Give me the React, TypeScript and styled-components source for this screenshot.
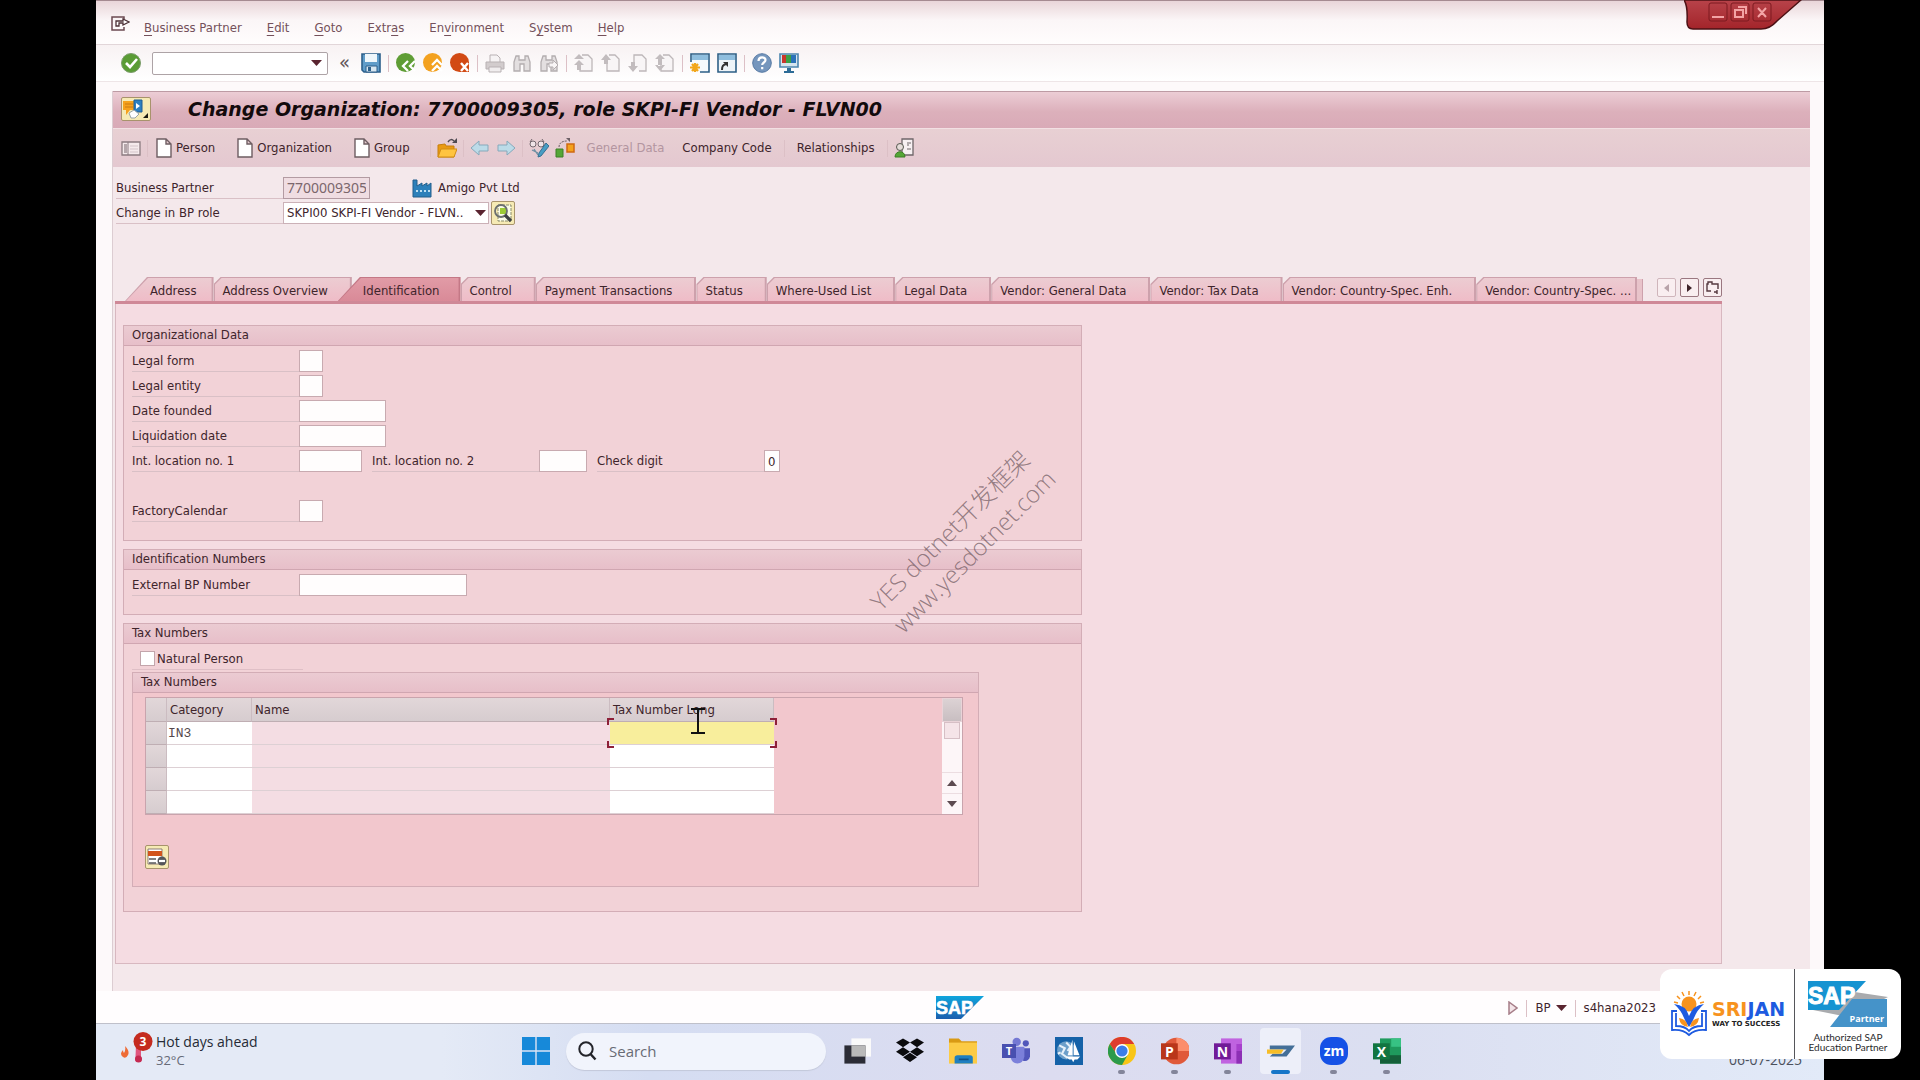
import React from 'react'
import styled, { createGlobalStyle } from 'styled-components'

interface IMenu {
  before: string
  key: string
  after: string
}
interface ITab {
  title: string
  active?: boolean
  sloped?: boolean
}
interface IField {
  id: string
  label: string
  width: number
  value?: string
}
interface IIcon {
  name: string
}

const menus: IMenu[] = [
  { before: '', key: 'B', after: 'usiness Partner' },
  { before: '', key: 'E', after: 'dit' },
  { before: '', key: 'G', after: 'oto' },
  { before: 'Extr', key: 'a', after: 's' },
  { before: 'En', key: 'v', after: 'ironment' },
  { before: 'S', key: 'y', after: 'stem' },
  { before: '', key: 'H', after: 'elp' },
]

const tools: string[] = [
  'save', '|', 'back', 'exit', 'cancel', '|', 'print', 'find', 'findNext', '|',
  'firstPage', 'prevPage', 'nextPage', 'lastPage', '|', 'session', 'shortcut', '|', 'help', 'monitor',
]

const tabs: ITab[] = [
  { title: 'Address', sloped: true },
  { title: 'Address Overview' },
  { title: 'Identification', sloped: true, active: true },
  { title: 'Control' },
  { title: 'Payment Transactions' },
  { title: 'Status' },
  { title: 'Where-Used List' },
  { title: 'Legal Data' },
  { title: 'Vendor: General Data' },
  { title: 'Vendor: Tax Data' },
  { title: 'Vendor: Country-Spec. Enh.' },
  { title: 'Vendor: Country-Spec. ...' },
]

const orgRows: IField[][] = [
  [{ id: 'legalForm', label: 'Legal form', width: 24 }],
  [{ id: 'legalEntity', label: 'Legal entity', width: 24 }],
  [{ id: 'founded', label: 'Date founded', width: 87 }],
  [{ id: 'liquidation', label: 'Liquidation date', width: 87 }],
  [
    { id: 'loc1', label: 'Int. location no. 1', width: 63 },
    { id: 'loc2', label: 'Int. location no. 2', width: 48 },
    { id: 'digit', label: 'Check digit', width: 16, value: '0' },
  ],
  [],
  [{ id: 'calendar', label: 'FactoryCalendar', width: 24 }],
]

const apps = [
  { name: 'taskView' },
  { name: 'dropbox' },
  { name: 'explorer' },
  { name: 'teams' },
  { name: 'ship' },
  { name: 'chrome', open: true },
  { name: 'powerpoint', open: true },
  { name: 'onenote', open: true },
  { name: 'sapLogon', open: true, active: true },
  { name: 'zoom', open: true },
  { name: 'excel', open: true },
]

const binoculars = (
  <path
    d="M2 18V9l2-6h3v4h6V3h3l2 6v9h-6v-7H8v7z"
    fill="#e3dfe0"
    stroke="#b3adaf"
    strokeWidth="1.3"
  />
)
const sheet = <path d="M8 2h6l4 4v12H6V9" fill="#f8f5f6" stroke="#bdb7b9" strokeWidth="1.3" />
const officeLetter = { fontFamily: 'Open Sans, sans-serif', fontWeight: 700, fill: '#fff' }

const drawings: Record<string, React.ReactElement> = {
  ok: (
    <>
      <circle cx="10" cy="10" r="9.5" fill="#5a9c35" stroke="#7b9c6a" />
      <path d="M5 10l4 4 7-8" fill="none" stroke="#fff" strokeWidth="2.6" />
    </>
  ),
  save: (
    <>
      <path d="M1 1h18v18H3l-2-2z" fill="#5f9cc9" stroke="#2c5f8b" strokeWidth="1.6" />
      <path d="M4 1h12v8H4z" fill="#eef6fb" />
      <path d="M5 13h11v6H5z" fill="#d7e6f0" stroke="#2c5f8b" />
      <path d="M7 14h3v4H7z" fill="#2c5f8b" />
    </>
  ),
  back: (
    <>
      <circle cx="9.5" cy="9.5" r="9.5" fill="#5f9d35" />
      <path d="M12 8l-5 5 5 5M19 8l-5 5 5 5" fill="none" stroke="#fff" strokeWidth="2.3" />
    </>
  ),
  exit: (
    <>
      <circle cx="9.5" cy="9.5" r="9.5" fill="#f3a11f" />
      <path d="M9 12l5-5 5 5M9 18l5-5 5 5" fill="none" stroke="#fff" strokeWidth="2.3" />
    </>
  ),
  cancel: (
    <>
      <circle cx="9.5" cy="9.5" r="9.5" fill="#d24a14" />
      <path d="M10 9h9v10h-9z" fill="#d24a14" />
      <path d="M11 10l7 8M18 10l-7 8" stroke="#fff" strokeWidth="2.4" />
    </>
  ),
  print: (
    <>
      <path d="M5 9V2h7l3 3v4" fill="#f6f3f4" stroke="#b8b1b3" />
      <path d="M1 9h18v7H1z" fill="#d2cccd" stroke="#b8b1b3" />
      <path d="M4 14h12v5H4z" fill="#f0edee" stroke="#b8b1b3" />
    </>
  ),
  find: binoculars,
  findNext: (
    <>
      {binoculars}
      <path d="M10 10h4V7l5 5-5 5v-3h-4z" fill="#f8f5f6" stroke="#b3adaf" />
    </>
  ),
  firstPage: (
    <>
      {sheet}
      <path d="M5 1l5 5H0zM5 7l5 5H0zM3 12h4v5H3z" fill="#c2bcbe" />
    </>
  ),
  prevPage: (
    <>
      {sheet}
      <path d="M5 1l5 6H7v4H3V7H0z" fill="#c2bcbe" />
    </>
  ),
  nextPage: (
    <>
      <path d="M6 9V2h8l4 4v12h-7" fill="#f8f5f6" stroke="#bdb7b9" strokeWidth="1.3" />
      <path d="M5 19l5-6H7V9H3v4H0z" fill="#c2bcbe" />
    </>
  ),
  lastPage: (
    <>
      {sheet}
      <path d="M5 1l5 5H0zM3 6h4v7H3zM5 18l5-6H0z" fill="#c2bcbe" />
    </>
  ),
  session: (
    <>
      <path d="M1 9V1h18v18h-9" fill="#f4f9fc" stroke="#2d5f86" strokeWidth="1.6" />
      <path d="M2 2h16v5H2z" fill="#8fbede" />
      <path d="M5 10v9M0 14.5h10M2 11l6 7M8 11l-6 7" stroke="#f2a71b" strokeWidth="2.2" />
    </>
  ),
  shortcut: (
    <>
      <path d="M1 1h18v18H1z" fill="#eef4f8" stroke="#2d5f86" strokeWidth="1.6" />
      <path d="M2 2h16v5H2z" fill="#8fbede" />
      <path d="M5 17c0-4 1-5 4-6" fill="none" stroke="#333" strokeWidth="2" />
      <path d="M6 9h5v5z" fill="#333" />
    </>
  ),
  help: (
    <>
      <circle cx="10" cy="10" r="9.3" fill="#7596bd" stroke="#5679a3" />
      <path
        d="M6.5 8c0-5 7-4.5 7-1 0 2.5-3.300 2.5-3.300 5M10.200 14v2.300"
        fill="none"
        stroke="#fff"
        strokeWidth="2.2"
      />
    </>
  ),
  monitor: (
    <>
      <path d="M1 1h18v13H1z" fill="#d5e4ee" stroke="#4d86ae" strokeWidth="1.6" />
      <path d="M3 2h4v8H3z" fill="#c9372c" />
      <path d="M7 2h5v8H7z" fill="#3da045" />
      <path d="M12 2h5v8h-5z" fill="#2b72b8" />
      <path d="M8 15h4v3h3v2H5v-2h3z" fill="#2d6c97" />
    </>
  ),
  panel: (
    <>
      <path d="M1 4h18v13H1z" fill="#f5eaec" stroke="#8b7b80" strokeWidth="1.3" />
      <path d="M3 6h3v9H3z" fill="#b5a7ab" />
      <path d="M7 4v13" stroke="#8b7b80" />
      <path d="M9 8h8M9 11h8M9 14h8" stroke="#d3c4c9" />
    </>
  ),
  page: <path d="M3 1h9l5 5v13H3z M12 1v5h5" fill="#fff" stroke="#6e5d62" strokeWidth="1.4" />,
  folder: (
    <>
      <path d="M1 7l7-1 1 2h8v11H1z" fill="#e99a13" stroke="#c77f0d" />
      <path d="M4 11h16l-3 8H1z" fill="#ffc440" stroke="#d18d16" />
      <path d="M11 4c2-3 4-3 6-1" fill="none" stroke="#4f4a52" strokeWidth="1.5" />
      <path d="M20 0v5h-5z" fill="#4f4a52" />
    </>
  ),
  left: <path d="M1 10l8-7v4h9v6H9v4z" fill="#bcdbe8" stroke="#86a9bb" />,
  right: <path d="M19 10l-8-7v4H2v6h9v4z" fill="#bcdbe8" stroke="#86a9bb" />,
  display: (
    <>
      <circle cx="4" cy="6" r="3" fill="#f0e4e8" stroke="#74686f" />
      <circle cx="12" cy="6" r="3" fill="#f0e4e8" stroke="#74686f" />
      <path d="M1 4l2-3M15 4l-2-3" stroke="#74686f" />
      <path d="M17 5l3 3-8 10-3 1 1-4z" fill="#489dc4" stroke="#356f92" />
      <path d="M5 11l4 6M3 12l6 3" stroke="#6d8ea2" strokeWidth="1.3" />
    </>
  ),
  relation: (
    <>
      <path d="M1 11h7v8H1z" fill="#55a636" stroke="#3c7f26" />
      <path d="M12 6h7v8h-7z" fill="#f4a21d" stroke="#cf6a12" strokeWidth="1.5" />
      <path d="M4 9c0-4 3-6 8-6" fill="none" stroke="#6d6066" strokeDasharray="2 1" />
      <path d="M11 0h4v4z" fill="#6d6066" />
    </>
  ),
  person: (
    <>
      <path d="M8 1h11v16H8z" fill="#f7f0f2" stroke="#6f6669" strokeWidth="1.3" />
      <path d="M14 4v4M13 11h4M16 4v2" stroke="#6f6669" />
      <circle cx="6" cy="9" r="3.5" fill="#e5dcd9" stroke="#55574f" />
      <path d="M1 19c0-7 10-7 10 0z" fill="#55a636" stroke="#3c7f26" />
    </>
  ),
  service: (
    <>
      <path d="M1 2h13v9H8l-4 5v-5H1z" fill="#f6a11c" />
      <path d="M3 5h8M3 8h8" stroke="#c97a10" />
      <path d="M12 1h8v12h-8z" fill="#2c7fc1" stroke="#1f5d93" />
      <path d="M14 4l4 3-4 3z" fill="#fff" />
      <path d="M7 14l5-3 5 4-4 4H9z" fill="#fff" stroke="#9aa5a8" />
      <path d="M26 14v5h-5z" fill="#1c1a12" />
    </>
  ),
  factory: (
    <>
      <path d="M1 2h4v6l5-3v3l5-3v3l4-3v14H1z" fill="#2d80ba" stroke="#235f8c" />
      <path d="M4 13h2M8 13h2M12 13h2M16 13h2" stroke="#bfe0f2" strokeWidth="2" />
    </>
  ),
  lookup: (
    <>
      <path d="M5 2h13v16H5z" fill="#fafbe6" stroke="#888a6c" strokeDasharray="3 1" />
      <path d="M7 5h7v6H7z" fill="#9ccb35" />
      <circle cx="8" cy="8" r="6" fill="none" stroke="#6b6f70" strokeWidth="1.8" />
      <path d="M12 12l6 6" stroke="#3c4043" strokeWidth="3.2" />
    </>
  ),
  removeRow: (
    <>
      <path d="M1 2h14v15H1z" fill="#fff" stroke="#8d7c74" />
      <path d="M1 4h14v5H1z" fill="#d2541c" />
      <path d="M2 12h7M2 16h7" stroke="#59595b" strokeWidth="1.5" />
      <circle cx="15" cy="14" r="4.5" fill="#55565a" />
      <path d="M12 14h6" stroke="#fff" strokeWidth="2.2" />
    </>
  ),
  windows: (
    <path
      d="M0 0h9.500v9.500H0zM10.500 0H20v9.500h-9.500zM0 10.500h9.500V20H0zM10.500 10.500H20V20h-9.500z"
      fill="#1789d9"
    />
  ),
  taskView: (
    <>
      <path d="M6 1h14v13H6z" fill="#fafafa" />
      <path d="M1 6h15v13H1z" fill="#2b2c36" />
      <path d="M6 6h10v8H6z" fill="#b9b9b9" />
    </>
  ),
  dropbox: (
    <path
      d="M5 1l5 3-5 3.300L0 4zM15 1l5 3-5 3.300L10 4zM5 7.300l5 3.200-5 3.200-5-3.200zM15 7.300l5 3.200-5 3.200-5-3.200zM5 14.500l5-3.200 5 3.200-5 3.300z"
      fill="#0b0b0e"
    />
  ),
  explorer: (
    <>
      <path d="M0 1h7l2 2h11v4H0z" fill="#d99a14" />
      <path d="M0 4h20v15H0z" fill="#fccb45" />
      <path d="M4 19v-4q0-2 2-2h9q2 0 2 2v4z" fill="#1f7fc0" />
      <path d="M7 16h7" stroke="#114f83" strokeWidth="1.2" />
    </>
  ),
  teams: (
    <>
      <circle cx="10.5" cy="3.5" r="3" fill="#7478d3" />
      <circle cx="17" cy="4.5" r="2.2" fill="#5157ba" />
      <path d="M13 8h7v6q-1 4-5 3z" fill="#5157ba" />
      <path d="M6 7h10v7q-1 5-5 5t-5-5z" fill="#7b80da" />
      <path d="M0 5h10v10H0z" fill="#4950b0" />
      <text x="5" y="13" fontSize="8" textAnchor="middle" style={officeLetter}>T</text>
    </>
  ),
  ship: (
    <>
      <path d="M0 0h20v20H0z" fill="#1562a8" />
      <circle cx="8" cy="9.5" r="6.5" fill="#6c9fca" />
      <path d="M3 6l4 2-2 4 4 3M8 4l3 3-2 3M4 11l-2 1" fill="none" stroke="#e6f1fa" strokeWidth="1.5" />
      <path d="M12.500 2v11H9zM13.500 3l4 10h-4zM8 14h10l-2 2h-2l-1 2-1-2h-2z" fill="#fff" />
    </>
  ),
  chrome: (
    <>
      <circle cx="10" cy="10" r="10" fill="#f8c517" />
      <path d="M1.300 5A10 10 0 0 1 18.700 5H10L6 12z" fill="#dd3c2d" />
      <path d="M1.300 5A10 10 0 0 0 10 20l4.500-8H6z" fill="#2b9a4b" />
      <circle cx="10" cy="10" r="5" fill="#fff" />
      <circle cx="10" cy="10" r="4" fill="#3b7de8" />
    </>
  ),
  powerpoint: (
    <>
      <circle cx="11" cy="10" r="9.5" fill="#e0593a" />
      <path d="M11 .5A9.500 9.500 0 0 1 20.500 10H11z" fill="#fc8e6c" />
      <path d="M0 4.500h12v11.500H0z" fill="#b9361a" />
      <text x="6" y="14" fontSize="10" textAnchor="middle" style={officeLetter}>P</text>
    </>
  ),
  onenote: (
    <>
      <path d="M5 1h15v18H5z" fill="#c063e0" />
      <path d="M16 5h4v5h-4z" fill="#a741cc" />
      <path d="M16 10h4v9h-4z" fill="#8d2fb5" />
      <path d="M0 4.500h12v11.500H0z" fill="#711b97" />
      <text x="6" y="14" fontSize="10" textAnchor="middle" style={officeLetter}>N</text>
    </>
  ),
  sapLogon: (
    <>
      <path d="M2 6h18l-6 8H2l2-2h7l3-3H2z" fill="#446f98" />
      <path d="M0 9h12l-2 3H0z" fill="#f6bd27" />
    </>
  ),
  zoom: (
    <>
      <rect width="20" height="20" rx="8" fill="#1551e6" />
      <text x="10" y="13.5" fontSize="10" textAnchor="middle" style={officeLetter}>zm</text>
    </>
  ),
  excel: (
    <>
      <path d="M5 1h15v18H5z" fill="#1f9a5d" />
      <path d="M13 1h7v6h-7z" fill="#37c283" />
      <path d="M5 13h15v6H5z" fill="#15603a" />
      <path d="M0 4.500h12v11.500H0z" fill="#127540" />
      <text x="6" y="14" fontSize="10" textAnchor="middle" style={officeLetter}>X</text>
    </>
  ),
}

const Icon = ({ name }: IIcon): React.ReactElement => (
  <svg width="20" height="20" viewBox="0 0 20 20" aria-hidden="true">
    {drawings[name]}
  </svg>
)

const Caret = (): React.ReactElement => (
  <svg width="11" height="6" viewBox="0 0 11 6" aria-hidden="true">
    <path d="M0 0h11L5.500 6z" fill="#5a2430" />
  </svg>
)

const SapLogo = ({ width }: { width: number }): React.ReactElement => (
  <svg width={width} viewBox="0 0 48 23" role="img" aria-label="SAP">
    <defs>
      <linearGradient id="sap" x2="0" y2="1">
        <stop stopColor="#0fa5dd" />
        <stop offset="1" stopColor="#1b5fae" />
      </linearGradient>
    </defs>
    <path d="M0 0h48L25 23H0z" fill="url(#sap)" />
    <text x="0" y="18" fontSize="18" fontFamily="Liberation Sans, sans-serif" fontWeight="700" fill="#fff" stroke="#fff" strokeWidth=".6">
      SAP
    </text>
  </svg>
)

const Field = ({ id, label, width, value = '' }: IField): React.ReactElement => (
  <>
    <Label htmlFor={id}>{label}</Label>
    <TextBox id={id} $width={width} defaultValue={value} />
  </>
)

const App = (): React.ReactElement => {
  return (
    <Screen>
      <GlobalStyle />
      <Window>
        <MenuBar>
          <svg width="19" height="15" viewBox="0 0 19 15" aria-hidden="true">
            <path d="M13 11v3H1V1h12v2" fill="none" stroke="#6b4a51" strokeWidth="1.5" />
            <path d="M5 10V5h7V3l6 3-6 3V7H8v3z" fill="#fff" stroke="#4c3036" strokeWidth="1.3" />
          </svg>
          {menus.map((el) => (
            <MenuItem key={el.key + el.after}>
              {el.before}
              <u>{el.key}</u>
              {el.after}
            </MenuItem>
          ))}
          <WindowButtons>
            <svg width="118" height="32" viewBox="0 0 118 32" aria-hidden="true">
              <defs>
                <linearGradient id="red" x2="0" y2="1">
                  <stop stopColor="#b8434a" />
                  <stop offset="1" stopColor="#a3242a" />
                </linearGradient>
              </defs>
              <path d="M0 0q4 6 3 22 0 7 6 7h68q9 0 16-8L117 0z" fill="url(#red)" stroke="#4b1014" strokeWidth="1.5" />
              <g fill="none" stroke="#7c1a20">
                <rect x="25" y="3" width="18" height="18" rx="2" />
                <rect x="47" y="3" width="18" height="18" rx="2" />
                <rect x="69" y="3" width="18" height="18" rx="2" />
              </g>
              <g fill="none" stroke="#f3a3a5" strokeWidth="2">
                <path d="M28 17h12M51 10h8v7h-8zM54 7h8v7M74 8l8 9M82 8l-8 9" />
              </g>
            </svg>
          </WindowButtons>
        </MenuBar>
        <ToolBar>
          <IconButton aria-label="Enter"><Icon name="ok" /></IconButton>
          <Command>
            <input aria-label="Command" />
            <Caret />
          </Command>
          <Collapse>«</Collapse>
          <Tools>
            {tools.map((el, i) =>
              el === '|' ? (
                <Divider key={i} />
              ) : (
                <IconButton key={i} aria-label={el}><Icon name={el} /></IconButton>
              ),
            )}
          </Tools>
        </ToolBar>
        <Workspace>
          <TitleBar>
            <YellowButton $width={30} aria-label="Services for object">
              <svg width="28" height="20" viewBox="0 0 28 20" aria-hidden="true">{drawings.service}</svg>
            </YellowButton>
            <h1>Change Organization: 7700009305, role SKPI-FI Vendor - FLVN00</h1>
          </TitleBar>
          <AppBar>
            <IconButton aria-label="Locator"><Icon name="panel" /></IconButton>
            <Divider />
            <AppButton><Icon name="page" />Person</AppButton>
            <AppButton><Icon name="page" />Organization</AppButton>
            <AppButton><Icon name="page" />Group</AppButton>
            <Divider />
            <IconButton aria-label="Open"><Icon name="folder" /></IconButton>
            <Divider />
            <IconButton aria-label="Previous"><Icon name="left" /></IconButton>
            <IconButton aria-label="Next"><Icon name="right" /></IconButton>
            <Divider />
            <IconButton aria-label="Display"><Icon name="display" /></IconButton>
            <IconButton aria-label="Relation"><Icon name="relation" /></IconButton>
            <AppText disabled>General Data</AppText>
            <AppText>Company Code</AppText>
            <Divider />
            <AppText>Relationships</AppText>
            <Divider />
            <IconButton aria-label="Person data"><Icon name="person" /></IconButton>
          </AppBar>
          <Content>
            <Rows>
              <Row>
                <Label htmlFor="bp">Business Partner</Label>
                <NumberBox id="bp" $width={87} readOnly value="7700009305" />
                <Company><Icon name="factory" />Amigo Pvt Ltd</Company>
              </Row>
              <Row>
                <Label htmlFor="role">Change in BP role</Label>
                <Role>
                  <select id="role">
                    <option>SKPI00 SKPI-FI Vendor - FLVN..</option>
                  </select>
                  <Caret />
                </Role>
                <YellowButton $width={24} aria-label="Role details"><Icon name="lookup" /></YellowButton>
              </Row>
            </Rows>
            <TabStrip>
              {tabs.map((el) => (
                <Tab key={el.title} $active={el.active} $sloped={el.sloped}>
                  <span>{el.title}</span>
                </Tab>
              ))}
              <TabEdge />
              <TabButtons>
                <TabButton disabled aria-label="Previous tab">
                  <svg width="5" height="8"><path d="M5 0v8L0 4z" fill="#b8a3a9" /></svg>
                </TabButton>
                <TabButton aria-label="Next tab">
                  <svg width="5" height="8"><path d="M0 0v8l5-4z" fill="#3d2329" /></svg>
                </TabButton>
                <TabButton aria-label="Tab list">
                  <svg width="13" height="13" fill="none" stroke="#55393f" strokeWidth="1.4">
                    <path d="M5 10H1V3h1V1h4v2h6v5M8 11h3M11 9v4" />
                  </svg>
                </TabButton>
              </TabButtons>
            </TabStrip>
            <TabPanel>
              <Group>
                <GroupTitle>Organizational Data</GroupTitle>
                <GroupBody>
                  {orgRows.map((row, i) => (
                    <Row key={i}>
                      {row.map((el) => (
                        <FieldSet key={el.id}><Field {...el} /></FieldSet>
                      ))}
                    </Row>
                  ))}
                </GroupBody>
              </Group>
              <Group>
                <GroupTitle>Identification Numbers</GroupTitle>
                <GroupBody>
                  <Row><Field id="external" label="External BP Number" width={168} /></Row>
                </GroupBody>
              </Group>
              <Group>
                <GroupTitle>Tax Numbers</GroupTitle>
                <GroupBody $last>
                  <CheckLabel>
                    <input type="checkbox" />
                    Natural Person
                  </CheckLabel>
                  <InnerGroup>
                    <GroupTitle>Tax Numbers</GroupTitle>
                    <TaxArea>
                      <TableFrame>
                        <TaxTable>
                          <colgroup>
                            <SelectCol />
                            <CategoryCol />
                            <col />
                            <LongCol />
                          </colgroup>
                          <thead>
                            <tr>
                              <th aria-label="Select" />
                              <th>Category</th>
                              <th>Name</th>
                              <th>Tax Number Long</th>
                            </tr>
                          </thead>
                          <tbody>
                            {['IN3', '', '', ''].map((el, i) => (
                              <tr key={i}>
                                <th aria-label="Select row" />
                                <Cell><input aria-label="Category" defaultValue={el} /></Cell>
                                <Cell $locked />
                                <Cell $focused={i === 0}>
                                  <input aria-label="Tax Number Long" />
                                  {i === 0 && (
                                    <>
                                      <Focus />
                                      <Pointer width="14" height="26" viewBox="0 0 14 26">
                                        <path d="M0 1h14M0 25h14M7 1v24" stroke="#111" strokeWidth="2" />
                                      </Pointer>
                                    </>
                                  )}
                                </Cell>
                              </tr>
                            ))}
                          </tbody>
                        </TaxTable>
                        <ScrollBar>
                          <ScrollHead />
                          <ScrollTrack><i /></ScrollTrack>
                          <ScrollButton aria-label="Scroll up">
                            <svg width="10" height="6"><path d="M5 0l5 6H0z" fill="#5c4a50" /></svg>
                          </ScrollButton>
                          <ScrollButton aria-label="Scroll down">
                            <svg width="10" height="6"><path d="M0 0h10L5 6z" fill="#5c4a50" /></svg>
                          </ScrollButton>
                        </ScrollBar>
                      </TableFrame>
                      <YellowButton $width={24} aria-label="Delete row"><Icon name="removeRow" /></YellowButton>
                    </TaxArea>
                  </InnerGroup>
                </GroupBody>
              </Group>
            </TabPanel>
          </Content>
        </Workspace>
        <StatusBar>
          <SapLogo width={48} />
          <StatusItems>
            <svg width="10" height="14" viewBox="0 0 10 14" aria-hidden="true">
              <path d="M1 1l8 6-8 6z" fill="#f3e4e8" stroke="#a67d88" strokeWidth="1.5" />
            </svg>
            <Divider />
            <StatusButton>BP <Caret /></StatusButton>
            <Divider />
            <span>s4hana2023</span>
          </StatusItems>
        </StatusBar>
        <TaskBar>
          <Weather>
            <svg width="34" height="36" viewBox="0 0 34 36" aria-hidden="true">
              <path d="M5 14q5 5 3 9-2 4-5 2-4-3 0-7 0 2 1 3 2-3 1-7z" fill="#ee6b35" />
              <path d="M16 12h5v13q2 5-2.500 5t-3-5z" fill="#e0567e" />
              <circle cx="18.5" cy="27" r="3.5" fill="#c52a51" />
              <circle cx="23" cy="9.5" r="9.5" fill="#c42b1f" />
              <text x="23" y="14" fontSize="12" textAnchor="middle" style={officeLetter}>3</text>
            </svg>
            <p>
              Hot days ahead
              <small>32°C</small>
            </p>
          </Weather>
          <Dock>
            <AppIcon aria-label="Start"><Icon name="windows" /></AppIcon>
            <Search>
              <svg width="19" height="20" viewBox="0 0 19 20" aria-hidden="true">
                <circle cx="8" cy="8" r="6.7" fill="none" stroke="#23242a" strokeWidth="2" />
                <path d="M12.500 13l5 5.500" stroke="#23242a" strokeWidth="2.4" />
              </svg>
              <input placeholder="Search" aria-label="Search" />
            </Search>
            <Apps>
              {apps.map((el) => (
                <AppIcon key={el.name} $open={el.open} $active={el.active} aria-label={el.name}>
                  <Icon name={el.name} />
                </AppIcon>
              ))}
            </Apps>
          </Dock>
          <Today>06-07-2025</Today>
        </TaskBar>
      </Window>
      <Watermark>
        YES dotnet开发框架
        <br />
        www.yesdotnet.com
      </Watermark>
      <Partners>
        <Srijan>
          <svg width="36" height="46" viewBox="0 0 36 46" aria-hidden="true">
            <circle cx="18" cy="13" r="7.5" fill="#f7931e" />
            <path
              d="M18 0v4M11 1l2 4M25 1l-2 4M6 5l3 3M30 5l-3 3M3 11l4 1M33 11l-4 1"
              stroke="#f7931e"
              strokeWidth="1.5"
            />
            <path d="M3 13q12 1 15 12 4-11 15-12-7 6-10 14-2 5-5 9-3-4-5-9-3-8-10-14z" fill="#1e5be0" />
            <path
              d="M6 20H1v19q11-1 17 5 6-6 17-5V20h-5M5 22v13q9 0 13 5 4-5 13-5V22"
              fill="none"
              stroke="#1e5be0"
              strokeWidth="1.8"
            />
            <path d="M8 27q8 1 9 9-8-1-9-9zM28 27q-8 1-9 9 8-1 9-9z" fill="#f7931e" />
          </svg>
          <div>
            <Brand><b>SRI</b>JAN</Brand>
            <Slogan>WAY TO SUCCESS</Slogan>
          </div>
        </Srijan>
        <SapPartner>
          <svg width="80" height="46" viewBox="0 0 80 46" role="img" aria-label="SAP Partner">
            <path d="M0 28L40 10l40 6-40 20z" fill="#a9abae" />
            <path d="M44 18h35v28H22z" fill="#4593c9" />
            <path d="M0 0h58L31 29H0z" fill="#1693d1" />
            <text x="0" y="23" fontSize="23" fontFamily="Liberation Sans, sans-serif" fontWeight="700" fill="#fff" stroke="#fff">SAP</text>
            <text x="76" y="41" fontSize="9" textAnchor="end" style={officeLetter}>Partner</text>
          </svg>
          <span>
            Authorized SAP
            <br />
            Education Partner
          </span>
        </SapPartner>
      </Partners>
    </Screen>
  )
}

const GlobalStyle = createGlobalStyle`
  * {
    box-sizing: border-box;
  }
  body {
    margin: 0;
    background: #000;
    color: #3e242b;
    font-family: 'DejaVu Sans Condensed', 'Noto Sans', sans-serif;
    font-size: 13px;
    line-height: 16px;
  }
  button,
  input,
  select {
    margin: 0;
    padding: 0;
    border: 0;
    background: none;
    color: inherit;
    font: inherit;
  }
  svg {
    display: block;
    flex: none;
  }
`
const Screen = styled.div`
  position: relative;
  min-height: 100vh;
  padding: 0 5%;
  display: flex;
`
const Window = styled.div`
  position: relative;
  flex: 1;
  min-width: 0;
  display: flex;
  flex-direction: column;
  background: #fdf9fa;
`
const MenuBar = styled.nav`
  display: flex;
  align-items: center;
  gap: 25px;
  height: 45px;
  padding: 10px 16px 0 15px;
  border-top: 1px solid #a58a91;
  border-bottom: 1px solid #e2d6d9;
  background: linear-gradient(#e9d5d9, #fbf6f7 45%, #fffdfd);
  svg {
    margin: -8px -11px 0 0;
  }
`
const MenuItem = styled.button`
  color: #74505a;
  white-space: nowrap;
  u {
    text-underline-offset: 3px;
  }
`
const WindowButtons = styled.div`
  position: absolute;
  top: 0;
  right: 22px;
  svg {
    margin: 0;
  }
`
const ToolBar = styled.div`
  display: flex;
  align-items: center;
  height: 37px;
  padding: 0 25px;
  border-bottom: 1px solid #eee5e7;
  background: linear-gradient(#f8f2f3, #fff);
`
const IconButton = styled.button`
  flex: none;
  width: 20px;
  height: 20px;
`
const Command = styled.div`
  position: relative;
  margin-left: 11px;
  input {
    display: block;
    width: 176px;
    height: 23px;
    padding: 0 24px 0 4px;
    border: 1px solid #ada3a6;
    border-radius: 2px;
    background: #fff;
  }
  svg {
    position: absolute;
    right: 6px;
    top: 8px;
  }
`
const Collapse = styled.button`
  width: 33px;
  padding-bottom: 3px;
  color: #62565a;
  font-size: 20px;
`
const Tools = styled.div`
  display: flex;
  align-items: center;
  gap: 7px;
`
const Divider = styled.i`
  flex: none;
  width: 1px;
  height: 17px;
  background: #dcc0c6;
`
const Workspace = styled.main`
  flex: 1;
  display: flex;
  flex-direction: column;
  margin: 9px 14px 0 16px;
  border-left: 1px solid #dccdd2;
`
const TitleBar = styled.header`
  display: flex;
  align-items: center;
  height: 37px;
  padding: 0 8px 2px;
  gap: 37px;
  border-top: 1px solid #bd9ba4;
  background: linear-gradient(#eccdd5, #dcb0bb 55%, #d9aab7);
  h1 {
    margin: 0;
    color: #120a0c;
    font-family: 'DejaVu Sans', sans-serif;
    font-size: 19px;
    line-height: 24px;
    font-style: italic;
    font-weight: 700;
    white-space: nowrap;
  }
`
const YellowButton = styled.button<{ $width: number }>`
  display: flex;
  align-items: center;
  justify-content: center;
  flex: none;
  width: ${({ $width }) => $width}px;
  height: 24px;
  border: 1px solid #a8936c;
  border-radius: 2px;
  background: #f6eab4;
`
const AppBar = styled.div`
  display: flex;
  align-items: center;
  gap: 6px;
  height: 39px;
  padding: 0 8px;
  border-top: 1px solid #f2e0e3;
  background: linear-gradient(#e8d0d3, #e4c8d0);
`
const AppButton = styled.button`
  display: flex;
  align-items: center;
  gap: 2px;
  margin-right: 14px;
  white-space: nowrap;
`
const AppText = styled.button`
  padding: 0 6px;
  white-space: nowrap;
  &:disabled {
    color: #b395a0;
  }
`
const Content = styled.div`
  flex: 1;
  display: flex;
  flex-direction: column;
  padding: 10px 88px 27px 2px;
  background: #f4e8eb;
`
const Rows = styled.div`
  display: flex;
  flex-direction: column;
  gap: 3px;
  padding-left: 1px;
`
const Row = styled.div`
  display: flex;
  height: 22px;
  align-items: center;
`
const FieldSet = styled.div`
  display: flex;
  margin-right: 10px;
`
const Label = styled.label`
  flex: none;
  width: 167px;
  height: 22px;
  border-bottom: 1px solid #d9c0c6;
  line-height: 22px;
`
const TextBox = styled.input<{ $width: number }>`
  width: ${({ $width }) => $width}px;
  height: 22px;
  padding: 0 3px;
  border: 1px solid #c8aab0;
  background: #fffdfd;
`
const NumberBox = styled(TextBox)`
  padding-bottom: 2px;
  border-color: #b39ba2;
  background: #f0dde2;
  color: #7b666c;
  font-family: 'Noto Sans', sans-serif;
  font-size: 14px;
`
const Company = styled.span`
  display: flex;
  align-items: center;
  gap: 6px;
  margin-left: 42px;
`
const Role = styled.div`
  position: relative;
  margin-right: 2px;
  select {
    display: block;
    width: 206px;
    height: 22px;
    padding: 0 18px 0 3px;
    appearance: none;
    border: 1px solid #cbb1b7;
    border-radius: 0;
    background: #fff;
  }
  svg {
    position: absolute;
    right: 3px;
    top: 8px;
  }
`
const TabStrip = styled.div`
  display: flex;
  align-items: flex-end;
  margin-top: 53px;
  padding-left: 10px;
  border-bottom: 3px solid #cf8897;
`
const Tab = styled.button<{ $active?: boolean; $sloped?: boolean }>`
  --shape: ${({ $sloped }) =>
    $sloped
      ? 'polygon(0 100%, 22px 0, 100% 0, 100% 100%)'
      : 'polygon(0 7px, 7px 0, 100% 0, 100% 100%, 0 100%)'};
  position: relative;
  height: 24px;
  margin-left: ${({ $active }) => ($active ? -14 : 0)}px;
  padding: 3px 24px 0 ${({ $sloped }) => ($sloped ? 25 : 9)}px;
  background: ${({ $active }) => ($active ? '#c47886' : '#cda1ac')};
  clip-path: var(--shape);
  white-space: nowrap;
  &::before {
    content: '';
    position: absolute;
    inset: 1px 2px 0 1px;
    background: ${({ $active }) =>
      $active ? 'linear-gradient(#e19ba6, #d98a98)' : 'linear-gradient(#ecccd2, #efbcc7)'};
    clip-path: var(--shape);
  }
  span {
    position: relative;
  }
  &:first-child {
    padding-right: 17px;
  }
  &:nth-child(3) {
    padding-right: 21px;
  }
  &:nth-child(12) {
    padding-right: 6px;
  }
`
const TabEdge = styled.i`
  width: 6px;
  height: 22px;
  border-right: 1px solid #cda1ac;
  background: #e8c3ca;
`
const TabButtons = styled.div`
  display: flex;
  gap: 4px;
  margin: 0 0 4px auto;
`
const TabButton = styled.button`
  display: flex;
  align-items: center;
  justify-content: center;
  width: 19px;
  height: 19px;
  border: 1px solid #9a7780;
  border-radius: 2px;
  background: #f9eef0;
  &:disabled {
    border-color: #cfb5bb;
  }
`
const TabPanel = styled.section`
  flex: 1;
  display: flex;
  flex-direction: column;
  gap: 8px;
  padding: 21px 0 51px 7px;
  border: 1px solid #d8b8c0;
  border-top: 0;
  background: #f5dce2;
`
const Group = styled.section`
  width: 60%;
  border: 1px solid #d3adb6;
  background: #f2d2d7;
`
const InnerGroup = styled(Group)`
  width: 90%;
  margin-top: 2px;
  background: #f2c7cd;
`
const GroupTitle = styled.h2`
  margin: 0;
  height: 20px;
  padding: 0 8px;
  border-bottom: 1px solid #d0a6b1;
  background: linear-gradient(#ebcbd2, #e7bfc9);
  font-size: 13px;
  font-weight: 400;
  line-height: 18px;
`
const GroupBody = styled.div<{ $last?: boolean }>`
  display: flex;
  flex-direction: column;
  gap: ${({ $last }) => ($last ? 0 : 3)}px;
  padding: 4px 8px ${({ $last }) => ($last ? 24 : 18)}px;
`
const CheckLabel = styled.label`
  display: flex;
  align-items: center;
  gap: 2px;
  width: 171px;
  height: 22px;
  padding-left: 8px;
  border-bottom: 1px solid #dfbfc6;
  input {
    width: 15px;
    height: 15px;
    appearance: none;
    border: 1px solid #c3a5ab;
    background: #fff;
  }
`
const TaxArea = styled.div`
  display: flex;
  flex-direction: column;
  gap: 30px;
  padding: 4px 15px 17px 12px;
`
const TableFrame = styled.div`
  display: flex;
  justify-content: space-between;
  border: 1px solid #c9a4ad;
`
const TaxTable = styled.table`
  width: 77%;
  table-layout: fixed;
  border-collapse: separate;
  border-spacing: 0;
  th {
    height: 23px;
    padding: 0 3px;
    border-right: 1px solid #cbbcc1;
    border-bottom: 1px solid #bfaeb3;
    background: linear-gradient(#e2d7d9, #d6cccf);
    font-weight: 400;
    text-align: left;
  }
  thead th {
    height: 24px;
  }
`
const SelectCol = styled.col`
  width: 21px;
`
const CategoryCol = styled.col`
  width: 85px;
`
const LongCol = styled.col`
  width: 164px;
`
const Cell = styled.td<{ $locked?: boolean; $focused?: boolean }>`
  position: relative;
  height: 23px;
  padding: 0 1px;
  border-bottom: 1px solid #ddd0d4;
  background: ${({ $locked, $focused }) => ($locked ? '#f4dde3' : $focused ? '#f8ee9c' : '#fff')};
  input {
    display: block;
    width: 100%;
    height: 20px;
    color: #55484c;
    font-family: 'Liberation Mono', monospace;
  }
`
const corner = '#8e2038'
const Focus = styled.i`
  position: absolute;
  inset: -4px -3px;
  z-index: 1;
  pointer-events: none;
  background:
    linear-gradient(${corner}, ${corner}) 0 0 / 7px 2px,
    linear-gradient(${corner}, ${corner}) 0 0 / 2px 7px,
    linear-gradient(${corner}, ${corner}) 100% 0 / 7px 2px,
    linear-gradient(${corner}, ${corner}) 100% 0 / 2px 7px,
    linear-gradient(${corner}, ${corner}) 0 100% / 7px 2px,
    linear-gradient(${corner}, ${corner}) 0 100% / 2px 7px,
    linear-gradient(${corner}, ${corner}) 100% 100% / 7px 2px,
    linear-gradient(${corner}, ${corner}) 100% 100% / 2px 7px;
  background-repeat: no-repeat;
`
const Pointer = styled.svg`
  position: absolute;
  left: 81px;
  top: -14px;
`
const ScrollBar = styled.div`
  display: flex;
  flex-direction: column;
  width: 20px;
  background: #fdf6f8;
`
const ScrollHead = styled.i`
  height: 24px;
  border: 1px solid #e9d3d8;
  background: linear-gradient(#dcd2d4, #c8bec1);
`
const ScrollTrack = styled.div`
  flex: 1;
  i {
    display: block;
    width: 16px;
    height: 17px;
    margin: 0 auto;
    border: 1px solid #d6bfc5;
    background: #f5e4e8;
  }
`
const ScrollButton = styled.button`
  display: flex;
  align-items: center;
  justify-content: center;
  height: 21px;
  border-top: 1px solid #ecdde1;
`
const StatusBar = styled.footer`
  display: grid;
  grid-template-columns: 1fr auto 1fr;
  align-items: center;
  height: 33px;
  border-bottom: 1px solid #bfc0ca;
  background: #fffdfe;
  > svg {
    grid-column: 2;
  }
`
const StatusItems = styled.div`
  display: flex;
  align-items: center;
  justify-content: flex-end;
  gap: 8px;
  padding: 2px 168px 0 0;
`
const StatusButton = styled.button`
  display: flex;
  align-items: center;
  gap: 5px;
`
const TaskBar = styled.div`
  display: grid;
  grid-template-columns: 1fr auto 1fr;
  align-items: center;
  height: 56px;
  padding: 0 22px 2px 24px;
  background: linear-gradient(90deg, #e4eaf6 20%, #d5ddf2 32%, #dcdcf0 55%, #dbdff1 75%, #e2eaf8);
  font-family: 'Open Sans', 'Noto Sans', sans-serif;
`
const Weather = styled.div`
  display: flex;
  gap: 2px;
  p {
    margin: 0;
    color: #252a35;
    font-size: 14px;
    line-height: 19px;
  }
  small {
    display: block;
    color: #666b78;
    font-size: 13px;
  }
`
const Dock = styled.div`
  display: flex;
  align-items: center;
  gap: 10px;
`
const Search = styled.label`
  display: flex;
  align-items: center;
  gap: 12px;
  width: 260px;
  height: 37px;
  padding: 0 12px;
  border-radius: 19px;
  background: #f1f4fc;
  box-shadow: 0 1px 1px #c3c8da;
  input {
    width: 180px;
    font-size: 15px;
    line-height: 20px;
  }
  input::placeholder {
    color: #686b75;
    opacity: 1;
  }
`
const Apps = styled.div`
  display: flex;
  gap: 12px;
`
const AppIcon = styled.button<{ $open?: boolean; $active?: boolean }>`
  position: relative;
  display: flex;
  align-items: center;
  justify-content: center;
  width: 41px;
  height: 46px;
  padding-bottom: 1px;
  border-radius: 4px;
  background: ${({ $active }) => ($active ? '#edeff9' : 'none')};
  svg {
    width: 28px;
    height: 28px;
  }
  &::after {
    content: '';
    display: ${({ $open }) => ($open ? 'block' : 'none')};
    position: absolute;
    bottom: 0;
    width: ${({ $active }) => ($active ? 19 : 7)}px;
    height: 4px;
    border-radius: 2px;
    background: ${({ $active }) => ($active ? '#1675c8' : '#83859a')};
  }
`
const Today = styled.time`
  padding-top: 18px;
  color: #4b505c;
  font-size: 14px;
  text-align: right;
`
const Watermark = styled.div`
  position: absolute;
  left: 50%;
  top: 50%;
  transform: translate(-50%, -50%) rotate(-45deg);
  padding: 4px 0 0 4px;
  color: rgba(95, 75, 82, 0.65);
  font-family: 'Open Sans', 'Noto Sans CJK SC', sans-serif;
  font-size: 24px;
  font-weight: 300;
  line-height: 32px;
  white-space: nowrap;
  pointer-events: none;
`
const Partners = styled.aside`
  position: absolute;
  right: 19px;
  bottom: 21px;
  display: flex;
  height: 90px;
  border-radius: 12px;
  background: #fff;
`
const Srijan = styled.div`
  display: flex;
  align-items: center;
  gap: 5px;
  width: 135px;
  padding-left: 11px;
  border-right: 1px solid #55565a;
`
const Brand = styled.div`
  color: #1e5be0;
  font-family: 'DejaVu Sans', sans-serif;
  font-size: 19px;
  font-weight: 700;
  line-height: 20px;
  b {
    color: #f7931e;
  }
`
const Slogan = styled.div`
  color: #222;
  font-family: 'DejaVu Sans', sans-serif;
  font-size: 7px;
  font-weight: 700;
  line-height: 10px;
  white-space: nowrap;
`
const SapPartner = styled.div`
  display: flex;
  flex-direction: column;
  align-items: center;
  gap: 5px;
  width: 106px;
  padding-top: 12px;
  color: #2a2a2c;
  font-family: Lato, sans-serif;
  font-size: 10px;
  line-height: 10px;
  text-align: center;
`

export default App
